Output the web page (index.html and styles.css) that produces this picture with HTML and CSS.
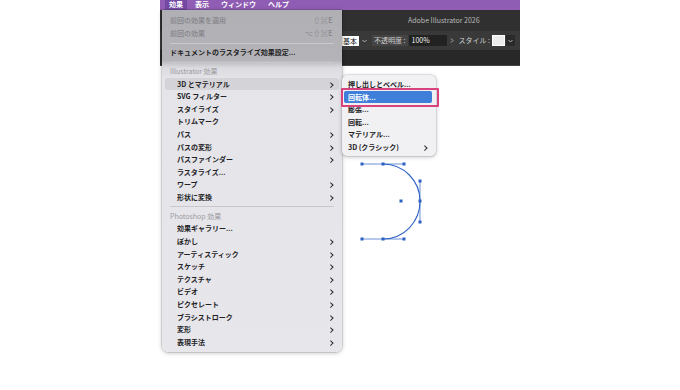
FILE: index.html
```html
<!DOCTYPE html>
<html lang="ja">
<head>
  <meta charset="UTF-8">
  <meta name="viewport" content="width=device-width, initial-scale=1.0">
  <title>効果 &gt; 3D とマテリアル &gt; 回転体</title>
  <link rel="stylesheet" href="styles.css">
</head>
<body>
  <div class="screen">
    <div class="menubar">
      <span class="mb-item active">効果</span>
      <span class="mb-item">表示</span>
      <span class="mb-item">ウィンドウ</span>
      <span class="mb-item">ヘルプ</span>
    </div>

    <div class="app">
      <div class="titlebar">Adobe Illustrator 2026</div>
      <div class="toolbar">
        <span class="preset">基本</span>
        <svg class="chev" width="5" height="4" viewBox="0 0 5 4"><polyline points="0.5,1 2.5,3 4.5,1" /></svg>
        <span class="label boxed">不透明度 :</span>
        <span class="field">100%</span>
        <svg class="chev right" width="4" height="5" viewBox="0 0 4 5"><polyline points="1,0.5 3,2.5 1,4.5" /></svg>
        <span class="label">スタイル :</span>
        <span class="swatch"></span>
        <span class="dropbtn"><svg class="chev" width="5" height="4" viewBox="0 0 5 4"><polyline points="0.5,1 2.5,3 4.5,1" /></svg></span>
      </div>
      <div class="lowerbar"></div>
    </div>

    <!-- artboard: selected path for revolve -->
    <svg class="shape" width="75" height="92" viewBox="355 155 75 92">
      <g class="handles">
        <line x1="362" y1="164" x2="404" y2="164" />
        <line x1="362" y1="239" x2="404" y2="239" />
        <line x1="420" y1="181" x2="420" y2="222" />
      </g>
      <path class="curve" d="M383,164 C404,164 420,181 420,201 C420,222 404,239 383,239" />
      <g class="points">
        <rect x="360.5" y="162.5" width="3" height="3" />
        <rect x="381.5" y="162.5" width="3" height="3" />
        <rect x="402.5" y="162.5" width="3" height="3" />
        <rect x="418.5" y="179.5" width="3" height="3" />
        <rect x="418.5" y="199.5" width="3" height="3" />
        <rect x="418.5" y="220.5" width="3" height="3" />
        <rect x="399.5" y="199.5" width="3" height="3" />
        <rect x="360.5" y="237.5" width="3" height="3" />
        <rect x="381.5" y="237.5" width="3" height="3" />
        <rect x="402.5" y="237.5" width="3" height="3" />
      </g>
    </svg>

    <div class="menu">
      <div class="row disabled">前回の効果を適用<span class="key">⇧⌘E</span></div>
      <div class="row disabled">前回の効果<span class="key">⌥⇧⌘E</span></div>
      <div class="sep"></div>
      <div class="row">ドキュメントのラスタライズ効果設定...</div>
      <div class="sep"></div>
      <div class="row header">Illustrator 効果</div>
      <div class="row in sub hover">3D とマテリアル</div>
      <div class="row in sub">SVG フィルター</div>
      <div class="row in sub">スタイライズ</div>
      <div class="row in">トリムマーク</div>
      <div class="row in sub">パス</div>
      <div class="row in sub">パスの変形</div>
      <div class="row in sub">パスファインダー</div>
      <div class="row in">ラスタライズ...</div>
      <div class="row in sub">ワープ</div>
      <div class="row in sub">形状に変換</div>
      <div class="sep"></div>
      <div class="row header">Photoshop 効果</div>
      <div class="row in">効果ギャラリー...</div>
      <div class="row in sub">ぼかし</div>
      <div class="row in sub">アーティスティック</div>
      <div class="row in sub">スケッチ</div>
      <div class="row in sub">テクスチャ</div>
      <div class="row in sub">ビデオ</div>
      <div class="row in sub">ピクセレート</div>
      <div class="row in sub">ブラシストローク</div>
      <div class="row in sub">変形</div>
      <div class="row in sub">表現手法</div>
    </div>

    <div class="submenu">
      <div class="row">押し出しとベベル...</div>
      <div class="row selected">回転体...</div>
      <div class="row">膨張...</div>
      <div class="row">回転...</div>
      <div class="row">マテリアル...</div>
      <div class="row sub">3D (クラシック)</div>
    </div>

    <div class="callout"></div>
  </div>
</body>
</html>
```

FILE: styles.css
```css
body {
  margin: 0;
  background: #ffffff;
  font-family: "Noto Sans CJK JP", "DejaVu Sans", sans-serif;
}

.screen {
  position: relative;
  margin-left: 160px;
  width: 360px;
  height: 390px;
}

/* macOS menu bar */
.menubar {
  display: flex;
  gap: 4px;
  height: 10px;
  padding-left: 5px;
  background: #8f5db3;
}

.mb-item {
  padding: 0 4px;
  font-size: 7px;
  line-height: 9px;
  font-weight: 700;
  color: #ffffff;
}

.mb-item.active {
  background: #7449a4;
}

/* Illustrator window chrome */
.app {
  background: #2c2c2c;
  border-bottom: 1px solid #444444;
}

.titlebar {
  height: 21px;
  line-height: 21px;
  padding-left: 248px;
  font-size: 7px;
  color: #b8b8b8;
  background: #303030;
}

.toolbar {
  display: flex;
  align-items: center;
  height: 19px;
  padding-left: 181px;
  background: #393939;
  font-size: 7px;
  color: #cfcfcf;
}

.preset {
  width: 16px;
  height: 10px;
  padding-left: 2px;
  line-height: 10px;
  background: #ffffff;
  color: #111111;
}

.chev {
  margin-left: 3px;
  fill: none;
  stroke: #bdbdbd;
  stroke-width: 0.9;
}

.chev.right {
  margin-left: 3px;
}

.label {
  margin-left: 5px;
  height: 11px;
  line-height: 11px;
}

.label.boxed {
  margin-left: 5px;
  padding: 0 2px;
  background: #444444;
}

.field {
  width: 35px;
  height: 11px;
  margin-left: 1px;
  padding-left: 3px;
  line-height: 11px;
  background: #222222;
  color: #f0f0f0;
}

.swatch {
  width: 11px;
  height: 9px;
  margin-left: 2px;
  background: #ececec;
  border: 1px solid #ffffff;
}

.dropbtn {
  display: flex;
  align-items: center;
  justify-content: center;
  width: 9px;
  height: 11px;
  margin-left: 1px;
  background: #2a2a2a;
}

.dropbtn .chev {
  margin-left: 0;
}

.lowerbar {
  height: 15px;
  background: #282828;
}

/* artboard path */
.shape {
  position: absolute;
  left: 195px;
  top: 155px;
}

.shape .curve {
  fill: none;
  stroke: #2c60c4;
  stroke-width: 1.1;
}

.shape .handles line {
  stroke: #2c60c4;
  stroke-width: 0.7;
}

.shape .points rect {
  fill: #2c60c4;
}

/* Effect menu */
.menu {
  position: absolute;
  left: 2px;
  top: 10px;
  width: 180px;
  padding: 4.4px 0 4px;
  border-radius: 0 0 6px 6px;
  background: linear-gradient(to bottom, #b0afb4 0, #b4b3b8 50px, #dcdbe0 58px, #e5e4e9 70px, #e7e6eb 100%);
  box-shadow: 0 1px 4px rgba(0, 0, 0, 0.25), 0 0 0 0.5px rgba(0, 0, 0, 0.2);
  font-size: 7px;
  font-weight: 600;
  color: #222224;
}

.row {
  position: relative;
  height: 12.6px;
  line-height: 12.6px;
  margin: 0 3px;
  padding-left: 5px;
  border-radius: 3px;
  white-space: nowrap;
}

.row.in {
  padding-left: 12px;
}

.row.disabled {
  color: #858489;
  font-weight: 500;
}

.row.header {
  color: #9c9ba0;
  font-weight: 400;
}

.row.hover {
  background: #d4d3d8;
}

.key {
  position: absolute;
  right: 6px;
  top: 0;
  letter-spacing: 0.5px;
}

.row.sub::after {
  content: "";
  position: absolute;
  right: 7px;
  top: 5px;
  width: 2.5px;
  height: 2.5px;
  border-top: 1.1px solid #2a2a2c;
  border-right: 1.1px solid #2a2a2c;
  transform: rotate(45deg);
}

.sep {
  height: 6.4px;
  margin: 0 8px;
  background: linear-gradient(#0000 2.9px, #c9c8cd 2.9px, #c9c8cd 3.6px, #0000 3.6px);
}

/* 3D submenu */
.submenu {
  position: absolute;
  left: 182px;
  top: 75px;
  width: 94px;
  padding: 3px 0 2px;
  border-radius: 5px;
  background: #f1f0f3;
  box-shadow: 0 1px 4px rgba(0, 0, 0, 0.25), 0 0 0 0.5px rgba(0, 0, 0, 0.15);
  font-size: 7px;
  font-weight: 600;
  color: #222224;
}

.submenu .row {
  margin: 0 4px 0 2px;
  padding-left: 4px;
  border-radius: 2px;
}

.submenu .row.sub::after {
  right: 6px;
}

.submenu .row.selected {
  background: #3f7fd9;
  color: #ffffff;
}

/* highlight frame drawn over the screenshot */
.callout {
  position: absolute;
  left: 181px;
  top: 88px;
  width: 94px;
  height: 15px;
  border: 2px solid #d8427f;
  border-radius: 1px;
}
```
